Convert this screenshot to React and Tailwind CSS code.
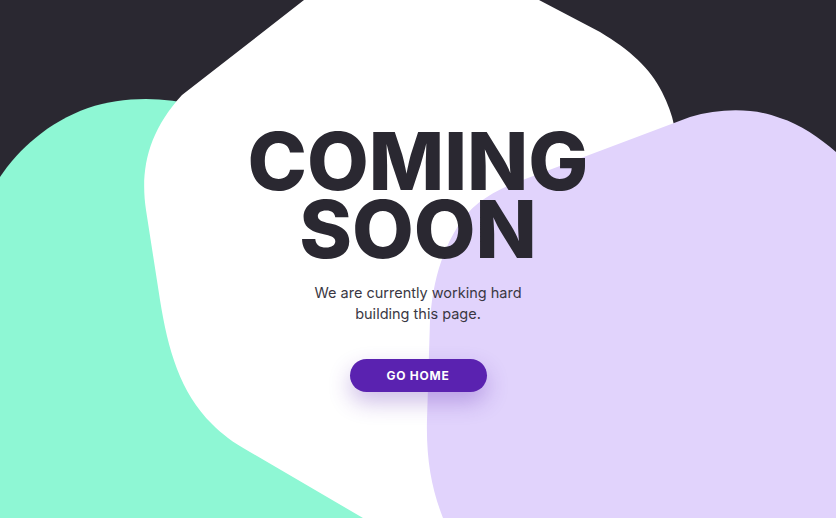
export default function App() {
  return (
    <div className="relative w-full h-[518px] overflow-hidden bg-[#2a2831] font-['Inter',sans-serif]">
      <Blobs />
      <main className="relative flex flex-col items-center pt-[127px]">
        <h1 className="flex flex-col items-center text-[80px] font-extrabold text-[#2a2831]">
          <span className="block h-[68px] leading-[68px]">COMING</span>
          <span className="block h-[68px] leading-[68px]">SOON</span>
        </h1>
        <p className="mt-[19px] text-[14.5px] leading-[21px] text-[#3a3843] text-center">
          We are currently working hard
          <br />
          building this page.
        </p>
        <button className="mt-[35px] w-[137px] h-[33px] rounded-full bg-[#5a22b0] text-white text-[12px] font-bold tracking-[0.06em] shadow-[0_10px_22px_rgba(90,34,176,0.3)]">
          GO HOME
        </button>
      </main>
    </div>
  );
}

function Blobs() {
  return (
    <svg className="absolute inset-0 w-full h-full" viewBox="0 0 836 518" preserveAspectRatio="none">
      {/* mint blob, left */}
      <path
        d="M0,177 C18,150 48,122 88,108 C122,97 160,96 200,106 L390,518 L0,518 Z"
        fill="#8ef7d4"
      />
      {/* white blob, center */}
      <path
        d="M304,0 L539,0 L600,32 C630,50 650,68 662,92 C668,104 672,115 674,125 L690,300 L520,518 L363,518 L250,452 C232,442 222,434 212,424 C180,392 168,350 160,300 L146,210 C140,170 148,132 182,95 Z"
        fill="#ffffff"
      />
      {/* lavender blob, right */}
      <path
        d="M836,152 C820,138 800,124 780,118 C755,108 720,108 690,117 L520,181 C490,192 470,206 458,226 C442,252 433,280 430,320 L427,420 C426,460 432,490 443,518 L836,518 Z"
        fill="#e1d3fc"
      />
    </svg>
  );
}
